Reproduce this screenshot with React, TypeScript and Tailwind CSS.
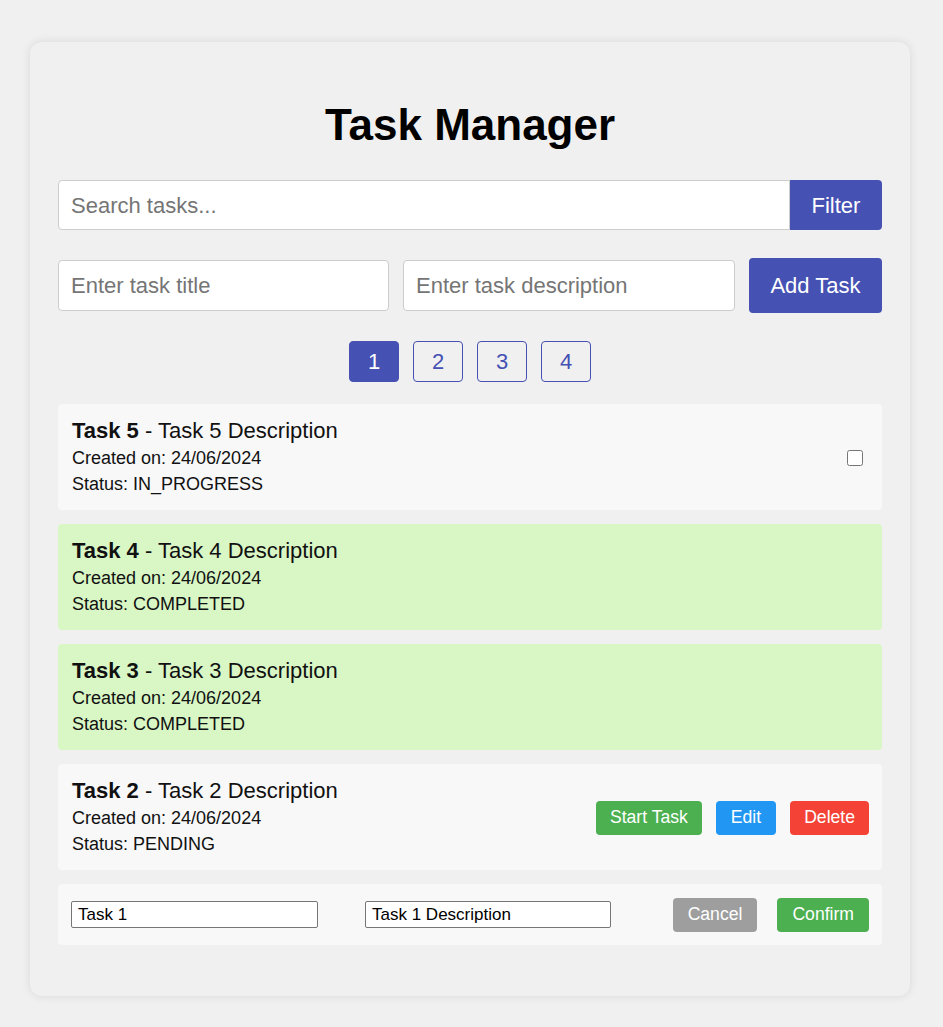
import React from 'react';

type Task = {
  id: number;
  title: string;
  description: string;
  created: string;
  status: 'PENDING' | 'IN_PROGRESS' | 'COMPLETED';
};

const tasks: Task[] = [
  { id: 5, title: 'Task 5', description: 'Task 5 Description', created: '24/06/2024', status: 'IN_PROGRESS' },
  { id: 4, title: 'Task 4', description: 'Task 4 Description', created: '24/06/2024', status: 'COMPLETED' },
  { id: 3, title: 'Task 3', description: 'Task 3 Description', created: '24/06/2024', status: 'COMPLETED' },
  { id: 2, title: 'Task 2', description: 'Task 2 Description', created: '24/06/2024', status: 'PENDING' },
];

const TaskItem: React.FC<{ task: Task }> = ({ task }) => {
  const done = task.status === 'COMPLETED';
  return (
    <div
      className={`flex items-center justify-between rounded-[4px] pl-[14px] pr-[13px] pt-[14px] pb-[13px] ${
        done ? 'bg-[#d9f7c5]' : 'bg-[#f8f8f8]'
      }`}
    >
      <div className="text-[#111]">
        <div className="text-[22px] leading-[25px]">
          <span className="font-bold">{task.title}</span> - {task.description}
        </div>
        <div className="mt-[2px] text-[18px] leading-[26px]">
          <div>Created on: {task.created}</div>
          <div>Status: {task.status}</div>
        </div>
      </div>
      {task.status === 'IN_PROGRESS' && (
        <input type="checkbox" className="mr-[6px] h-4 w-4" />
      )}
      {task.status === 'PENDING' && (
        <div className="flex gap-[14px]">
          <button className="h-[34px] rounded-[4px] bg-[#4caf50] px-[14px] text-[17.6px] text-white">Start Task</button>
          <button className="h-[34px] rounded-[4px] bg-[#2196f3] px-[15px] text-[17.6px] text-white">Edit</button>
          <button className="h-[34px] rounded-[4px] bg-[#f44336] px-[14px] text-[17.6px] text-white">Delete</button>
        </div>
      )}
    </div>
  );
};

export default function App() {
  return (
    <div className="min-h-[1027px] bg-[#f0f0f0] pt-[42px] pb-[31px] font-['Liberation_Sans',Arial,sans-serif]">
      <div className="ml-[30px] w-[880px] rounded-[12px] bg-[#f0f0f0] px-[28px] pt-[58px] pb-[51px] shadow-[0_0_10px_rgba(0,0,0,0.1)]">
        <h1 className="text-center text-[44px] font-bold leading-[50px] text-black">Task Manager</h1>

        <div className="mt-[30px] flex h-[50px]">
          <input
            placeholder="Search tasks..."
            className="flex-1 rounded-l-[4px] border border-[#ccc] bg-white px-3 text-[22px] text-black outline-none placeholder:text-[#757575]"
          />
          <button className="w-[92px] rounded-r-[4px] bg-[#4551b3] text-[22px] text-white">Filter</button>
        </div>

        <div className="mt-[28px] flex items-center gap-[14px]">
          <input
            placeholder="Enter task title"
            className="h-[51px] w-[331px] rounded-[4px] border border-[#ccc] bg-white px-3 text-[22px] outline-none placeholder:text-[#757575]"
          />
          <input
            placeholder="Enter task description"
            className="h-[51px] w-[332px] rounded-[4px] border border-[#ccc] bg-white px-3 text-[22px] outline-none placeholder:text-[#757575]"
          />
          <button className="h-[55px] flex-1 rounded-[4px] bg-[#4551b3] text-[22px] text-white">Add Task</button>
        </div>

        <div className="mt-[28px] flex justify-center gap-[14px]">
          {[1, 2, 3, 4].map((n) => (
            <button
              key={n}
              className={`h-[41px] w-[50px] rounded-[4px] border border-[#4551b3] text-[22px] ${
                n === 1 ? 'bg-[#4551b3] text-white' : 'bg-transparent text-[#4551b3]'
              }`}
            >
              {n}
            </button>
          ))}
        </div>

        <div className="mt-[22px] flex flex-col gap-[14px]">
          {tasks.map((t) => (
            <TaskItem key={t.id} task={t} />
          ))}

          <div className="flex h-[61px] items-center rounded-[4px] bg-[#f8f8f8] pl-[13px] pr-[13px]">
            <input
              defaultValue="Task 1"
              className="h-[27px] w-[247px] rounded-[2px] border border-[#767676] bg-white px-[6px] text-[17px] text-black outline-none"
            />
            <input
              defaultValue="Task 1 Description"
              className="ml-[47px] h-[27px] w-[246px] rounded-[2px] border border-[#767676] bg-white px-[6px] text-[17px] text-black outline-none"
            />
            <div className="ml-auto flex gap-[20px]">
              <button className="h-[34px] rounded-[4px] bg-[#9e9e9e] px-[15px] text-[17.6px] text-white">Cancel</button>
              <button className="h-[34px] rounded-[4px] bg-[#4caf50] px-[15px] text-[17.6px] text-white">Confirm</button>
            </div>
          </div>
        </div>
      </div>
    </div>
  );
}
